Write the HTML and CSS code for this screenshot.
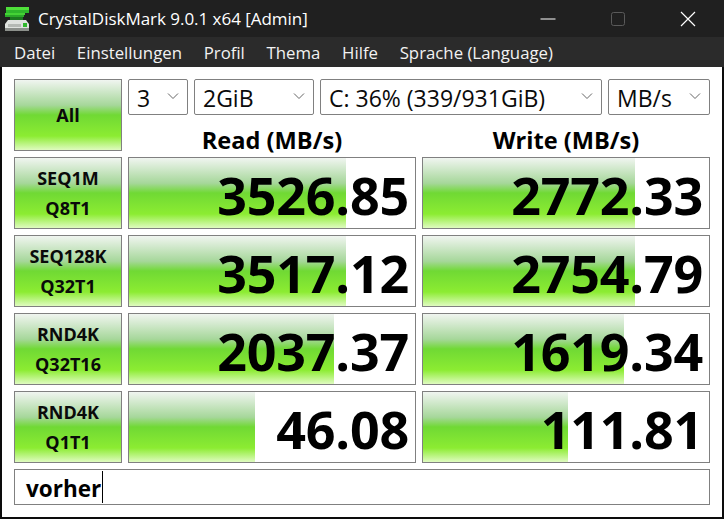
FILE: index.html
```html
<!DOCTYPE html>
<html lang="de">
<head>
<meta charset="utf-8">
<title>CrystalDiskMark 9.0.1 x64 [Admin]</title>
<link rel="stylesheet" href="styles.css">
</head>
<body>
<div class="window">
  <header class="titlebar">
    <svg class="app-icon" width="24" height="24" viewBox="0 0 24 24">
      <rect x="1" y="0" width="23" height="3" fill="#4fe03a"/>
      <rect x="1" y="3" width="23" height="3" fill="#2fb82c"/>
      <rect x="0" y="6" width="20" height="2" fill="#45d236"/>
      <rect x="0" y="8" width="19" height="2" fill="#2aa828"/>
      <rect x="5" y="10" width="13" height="3" fill="#1c7a20"/>
      <path d="M3 13H21L24 17V24H0V17Z" fill="#dfe2de"/>
      <rect x="0" y="21" width="24" height="3" fill="#8c908b"/>
      <rect x="3" y="17" width="13" height="3" fill="#b5b9b4"/>
      <rect x="18" y="16" width="4" height="4" fill="#2fb82c"/>
    </svg>
    <span class="app-title">CrystalDiskMark 9.0.1 x64 [Admin]</span>
    <div class="win-controls">
      <svg class="win-btn" width="16" height="16" viewBox="0 0 16 16"><path d="M0.500 8H15.500" stroke="#fff" stroke-width="1"/></svg>
      <svg class="win-btn" width="16" height="16" viewBox="0 0 16 16"><rect x="1.500" y="1.500" width="13" height="13" rx="2" fill="none" stroke="#5a5a5a"/></svg>
      <svg class="win-btn" width="16" height="16" viewBox="0 0 16 16"><path d="M1 1L15 15M15 1L1 15" stroke="#fff" stroke-width="1.200"/></svg>
    </div>
  </header>
  <nav class="menubar">
    <span>Datei</span><span>Einstellungen</span><span>Profil</span><span>Thema</span><span>Hilfe</span><span>Sprache (Language)</span>
  </nav>
  <main class="content">
    <div class="grid">
      <div class="btn btn-all">All</div>
      <div class="controls">
        <div class="toolbar">
          <div class="select sel-count"><span>3</span><svg class="chev" width="12" height="8" viewBox="0 0 12 8"><path d="M1 1.500L6 6.500L11 1.500" fill="none" stroke="#666"/></svg></div>
          <div class="select sel-size"><span>2GiB</span><svg class="chev" width="12" height="8" viewBox="0 0 12 8"><path d="M1 1.500L6 6.500L11 1.500" fill="none" stroke="#666"/></svg></div>
          <div class="select sel-drive"><span>C: 36% (339/931GiB)</span><svg class="chev" width="12" height="8" viewBox="0 0 12 8"><path d="M1 1.500L6 6.500L11 1.500" fill="none" stroke="#666"/></svg></div>
          <div class="select sel-unit"><span>MB/s</span><svg class="chev" width="12" height="8" viewBox="0 0 12 8"><path d="M1 1.500L6 6.500L11 1.500" fill="none" stroke="#666"/></svg></div>
        </div>
        <div class="heads"><div>Read (MB/s)</div><div>Write (MB/s)</div></div>
      </div>

      <div class="btn">SEQ1M<br>Q8T1</div>
      <div class="result"><div class="bar" style="width:217px"></div><span>3526.85</span></div>
      <div class="result"><div class="bar" style="width:212px"></div><span>2772.33</span></div>

      <div class="btn">SEQ128K<br>Q32T1</div>
      <div class="result"><div class="bar" style="width:217px"></div><span>3517.12</span></div>
      <div class="result"><div class="bar" style="width:212px"></div><span>2754.79</span></div>

      <div class="btn">RND4K<br>Q32T16</div>
      <div class="result"><div class="bar" style="width:205px"></div><span>2037.37</span></div>
      <div class="result"><div class="bar" style="width:201px"></div><span>1619.34</span></div>

      <div class="btn">RND4K<br>Q1T1</div>
      <div class="result"><div class="bar" style="width:126px"></div><span>46.08</span></div>
      <div class="result"><div class="bar" style="width:145px"></div><span>111.81</span></div>

      <div class="comment"><span class="comment-text">vorher</span><i class="caret"></i></div>
    </div>
  </main>
</div>
</body>
</html>
```
FILE: styles.css
```css
* { box-sizing: border-box; }
html, body { margin: 0; padding: 0; }
body {
  width: 724px;
  height: 519px;
  overflow: hidden;
  background: #0c0c0c;
  font-family: "Open Sans", "Noto Sans", sans-serif;
}
.window { display: flex; flex-direction: column; height: 517px; }
.titlebar {
  flex: none;
  height: 37px;
  background: #202020;
  display: flex;
  align-items: center;
  padding-left: 5px;
  color: #fff;
}
.app-icon { flex: none; margin-right: 9px; }
.app-title { font-size: 17px; letter-spacing: -0.03px; }
.win-controls {
  margin-left: auto;
  display: flex;
  gap: 54px;
  padding-right: 28px;
}
.win-btn { display: block; }
.menubar {
  flex: none;
  height: 30px;
  background: #2b2b2b;
  display: flex;
  align-items: center;
  gap: 21.700px;
  padding-left: 14px;
  color: #f2f2f2;
  font-size: 16.800px;
}
.content {
  flex: 1;
  min-height: 0;
  margin: 0 2px;
  background: #fff;
  padding: 12px 12px 0;
}
.grid {
  display: grid;
  grid-template-columns: 108px 288px 288px;
  grid-template-rows: 72px 72px 72px 72px 72px 36px;
  gap: 6px;
}
.btn {
  border: 1px solid #808080;
  background: linear-gradient(180deg, #f0f5f0 0%, #a6d79a 36%, #70d934 50%, #8cec32 80%, #dffbc0 100%);
  text-align: center;
  font-weight: 700;
  font-size: 18px;
  line-height: 30px;
  color: #0a0a0a;
  display: flex;
  align-items: center;
  justify-content: center;
}
.controls { grid-column: 2 / 4; display: flex; flex-direction: column; }
.toolbar { display: flex; gap: 6px; height: 36px; flex: none; }
.select {
  border: 1px solid #808080;
  border-radius: 2px;
  background: #fff;
  height: 36px;
  display: flex;
  align-items: center;
  justify-content: space-between;
  padding: 1px 8px 0;
  font-size: 23px;
  color: #0a0a0a;
}
.chev { flex: none; margin-bottom: 4px; }
.sel-count { width: 60px; }
.sel-size { width: 120px; }
.sel-drive { width: 282px; }
.sel-unit { width: 102px; }
.heads {
  display: grid;
  grid-template-columns: 288px 288px;
  gap: 6px;
  text-align: center;
  font-weight: 700;
  font-size: 23.600px;
  line-height: 36px;
  height: 36px;
  margin-top: 7px;
  color: #000;
}
.result {
  position: relative;
  border: 1px solid #808080;
  background: #fff;
  display: flex;
  align-items: center;
  justify-content: flex-end;
  padding: 3px 6px 0 0;
  font-weight: 700;
  font-size: 52px;
  letter-spacing: -0.2px;
  line-height: 1;
  color: #000;
}
.result span { position: relative; }
.bar {
  position: absolute;
  left: 0;
  top: 0;
  bottom: 0;
  background: linear-gradient(180deg, #f0f5f0 0%, #a6d79a 36%, #70d934 50%, #8cec32 80%, #dffbc0 100%);
}
.comment {
  grid-column: 1 / 4;
  border: 1px solid #808080;
  display: flex;
  align-items: center;
  padding-left: 11px;
  font-weight: 700;
  font-size: 22.500px;
  color: #000;
}
.comment-text { padding-top: 3px; }
.caret { display: block; width: 1px; height: 32px; background: #000; margin-left: 1px; }
```
